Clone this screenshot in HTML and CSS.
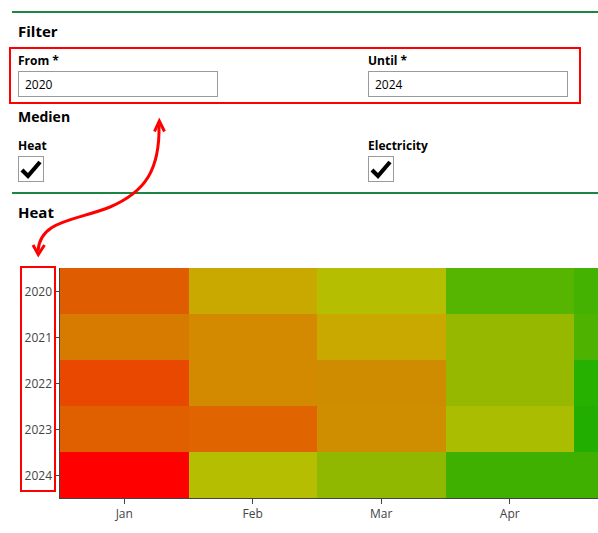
FILE: index.html
```html
<!DOCTYPE html>
<html lang="en">
<head>
<meta charset="utf-8">
<title>Filter</title>
<link rel="stylesheet" href="styles.css">
</head>
<body>
<div class="page">
  <div class="rule"></div>
  <section class="section">
    <h2 class="title">Filter</h2>
    <div class="cols">
      <div class="field">
        <label class="label">From *</label>
        <input class="input" type="text" value="2020">
      </div>
      <div class="field">
        <label class="label">Until *</label>
        <input class="input" type="text" value="2024">
      </div>
    </div>
    <h3 class="subtitle">Medien</h3>
    <div class="cols">
      <div class="field">
        <span class="label label-check">Heat</span>
        <span class="checkbox"><svg viewBox="0 0 24 24" width="24" height="24"><polyline points="3,13 9,19 21,5" fill="none" stroke="#000" stroke-width="4.2" stroke-linejoin="miter" stroke-linecap="butt"/></svg></span>
      </div>
      <div class="field">
        <span class="label label-check">Electricity</span>
        <span class="checkbox"><svg viewBox="0 0 24 24" width="24" height="24"><polyline points="3,13 9,19 21,5" fill="none" stroke="#000" stroke-width="4.2" stroke-linejoin="miter" stroke-linecap="butt"/></svg></span>
      </div>
    </div>
  </section>
  <div class="rule rule-second"></div>
  <section class="section">
    <h2 class="title title-heat">Heat</h2>
  </section>
  <div class="chart">
    <div class="yaxis">
      <div class="ylabel">2020</div>
      <div class="ylabel">2021</div>
      <div class="ylabel">2022</div>
      <div class="ylabel">2023</div>
      <div class="ylabel">2024</div>
    </div>
    <div class="plot">
      <div class="cells">
        <div class="cell" style="background:#e05c00"></div>
        <div class="cell" style="background:#c9a900"></div>
        <div class="cell" style="background:#b5be00"></div>
        <div class="cell" style="background:#55b500"></div>
        <div class="cell" style="background:#44b200"></div>

        <div class="cell" style="background:#d67a00"></div>
        <div class="cell" style="background:#d48a00"></div>
        <div class="cell" style="background:#c9a900"></div>
        <div class="cell" style="background:#96b900"></div>
        <div class="cell" style="background:#4db300"></div>

        <div class="cell" style="background:#e84800"></div>
        <div class="cell" style="background:#d48a00"></div>
        <div class="cell" style="background:#d08c00"></div>
        <div class="cell" style="background:#96b900"></div>
        <div class="cell" style="background:#26b000"></div>

        <div class="cell" style="background:#e06000"></div>
        <div class="cell" style="background:#e06400"></div>
        <div class="cell" style="background:#cf8e00"></div>
        <div class="cell" style="background:#abbd00"></div>
        <div class="cell" style="background:#22ae00"></div>

        <div class="cell" style="background:#ff0000"></div>
        <div class="cell" style="background:#b5be00"></div>
        <div class="cell" style="background:#90b800"></div>
        <div class="cell" style="background:#40b000"></div>
        <div class="cell" style="background:#40b000"></div>
      </div>
    </div>
    <div class="xaxis">
      <div class="xlabel">Jan</div>
      <div class="xlabel">Feb</div>
      <div class="xlabel">Mar</div>
      <div class="xlabel">Apr</div>
    </div>
  </div>

  <div class="mark mark-filter"></div>
  <div class="mark mark-years"></div>
  <svg class="arrow" width="598" height="533" viewBox="0 0 598 533">
    <path d="M159,125 C160,170 145,192 110,207 C75,221 40,220 38,251" fill="none" stroke="#ff0000" stroke-width="3"/>
    <polyline points="154.5,131.5 159.3,121 164.5,131.5" fill="none" stroke="#ff0000" stroke-width="3" stroke-linejoin="miter"/>
    <polyline points="33,245 38.3,254.5 44.5,245" fill="none" stroke="#ff0000" stroke-width="3" stroke-linejoin="miter"/>
  </svg>
</div>
</body>
</html>
```

FILE: styles.css
```css
* { box-sizing: border-box; }

html, body {
  margin: 0;
  padding: 0;
  background: #fff;
  overflow: hidden;
}

body {
  font-family: "Open Sans", "Noto Sans", "Liberation Sans", sans-serif;
  color: #000;
  width: 598px;
  height: 533px;
}

.page {
  position: relative;
  padding: 11px 0 0 12px;
  height: 533px;
}

.rule {
  height: 2px;
  background: #1b8544;
}

.rule-second {
  margin-top: 10px;
}

.section {
  padding: 0 6px;
}

.title {
  margin: 8px 0 0;
  font-size: 15px;
  line-height: 20px;
  font-weight: 700;
}

.title-heat {
  margin-top: 8px;
}

.subtitle {
  margin: 11px 0 0;
  font-size: 14px;
  line-height: 18px;
  font-weight: 700;
}

.cols {
  display: grid;
  grid-template-columns: 350px 200px;
  margin-top: 12px;
}

.subtitle + .cols {
  margin-top: 12px;
}

.field {
  display: flex;
  flex-direction: column;
  align-items: flex-start;
}

.label {
  font-size: 12px;
  line-height: 16px;
  font-weight: 700;
}

.input {
  margin-top: 2px;
  width: 200px;
  height: 26px;
  border: 1px solid #9a9a9a;
  padding: 0 6px;
  font-family: inherit;
  font-size: 12px;
  color: #000;
  background: #fff;
  outline: none;
}

.checkbox {
  margin-top: 2px;
  width: 26px;
  height: 26px;
  border: 1px solid #9a9a9a;
  display: flex;
  align-items: center;
  justify-content: center;
}

.checkbox svg {
  display: block;
}

/* chart */
.chart {
  margin-top: 46px;
  display: grid;
  grid-template-columns: 47px 539px;
  grid-template-rows: 231px auto;
}

.yaxis {
  display: grid;
  grid-template-rows: repeat(5, 46px);
}

.ylabel {
  display: flex;
  align-items: center;
  justify-content: flex-end;
  font-size: 12px;
  color: #444;
}

.ylabel::after {
  content: "";
  display: block;
  width: 4px;
  height: 1px;
  background: #444;
  margin-left: 3px;
}

.plot {
  border-left: 1px solid #444;
  border-bottom: 1px solid #444;
  overflow: hidden;
}

.cells {
  display: grid;
  grid-template-columns: repeat(5, 128.5px);
  grid-template-rows: repeat(5, 46px);
  width: 642.5px;
}

.cell {
  width: 100%;
  height: 100%;
}

.xaxis {
  grid-column: 2;
  display: grid;
  grid-template-columns: repeat(4, 128.5px);
  padding-left: 1px;
}

.xlabel {
  display: flex;
  flex-direction: column;
  align-items: center;
  font-size: 12px;
  line-height: 16px;
  color: #444;
}

.xlabel::before {
  content: "";
  display: block;
  width: 1px;
  height: 5px;
  background: #444;
  margin-bottom: 2px;
}

/* annotations */
.mark {
  position: absolute;
  border: 2px solid #ff0000;
}

.mark-filter {
  left: 9px;
  top: 47px;
  width: 572px;
  height: 57px;
}

.mark-years {
  left: 20px;
  top: 266px;
  width: 36px;
  height: 226px;
}

.arrow {
  position: absolute;
  left: 0;
  top: 0;
  pointer-events: none;
}
```
